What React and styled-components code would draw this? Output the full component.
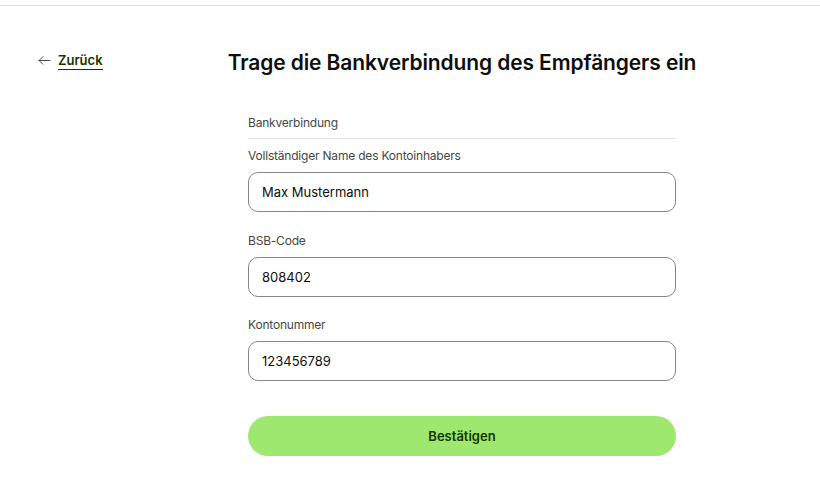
import React from "react";
import styled, { createGlobalStyle } from "styled-components";

const GlobalStyle = createGlobalStyle`
  html, body {
    margin: 0;
    padding: 0;
    background: #fff;
    font-family: Inter, "Noto Sans", sans-serif;
    color: #0e0f0c;
  }
`;

const fields = [
  { label: "Vollständiger Name des Kontoinhabers", value: "Max Mustermann", gap: 21 },
  { label: "BSB-Code", value: "808402", gap: 20 },
  { label: "Kontonummer", value: "123456789", gap: 20 },
];

const App = () => {
  return (
    <>
      <GlobalStyle />
      <TopBar />
      <Page>
        <Aside>
          <BackLink href="#">
            <svg width="13" height="13" viewBox="0 0 24 24" fill="none" stroke="#454745" strokeWidth="1.8" strokeLinecap="round" strokeLinejoin="round">
              <path d="M22 12H2" />
              <path d="M9 5l-7 7 7 7" />
            </svg>
            <span>Zurück</span>
          </BackLink>
        </Aside>
        <Main>
          <Title>Trage die Bankverbindung des Empfängers ein</Title>
          <Form onSubmit={(e) => e.preventDefault()}>
            <Section>Bankverbindung</Section>
            {fields.map((f) => (
              <Field key={f.label} $gap={f.gap}>
                <Label>{f.label}</Label>
                <Input defaultValue={f.value} />
              </Field>
            ))}
            <SubmitButton type="submit">Bestätigen</SubmitButton>
          </Form>
        </Main>
      </Page>
    </>
  );
};

export default App;

const TopBar = styled.div`
  height: 5px;
  border-bottom: 1px solid #dedede;
`;

const Page = styled.div`
  display: flex;
  padding: 0 38px;
`;

const Aside = styled.div`
  width: 210px;
  flex-shrink: 0;
  padding-top: 45px;
`;

const BackLink = styled.a`
  display: inline-flex;
  align-items: center;
  gap: 7px;
  text-decoration: none;
  color: #163300;
  font-size: 13px;
  font-weight: 600;

  span {
    border-bottom: 1.5px solid #163300;
    line-height: 18px;
  }
`;

const Main = styled.div`
  width: 428px;
  display: flex;
  flex-direction: column;
`;

const Title = styled.h1`
  margin: 43px -60px 0;
  text-align: center;
  font-size: 21px;
  line-height: 28px;
  font-weight: 600;
  letter-spacing: -0.12px;
  color: #0e0f0c;
`;

const Form = styled.form`
  display: flex;
  flex-direction: column;
  margin-top: 38px;
`;

const Section = styled.div`
  font-size: 12px;
  line-height: 16px;
  letter-spacing: -0.2px;
  color: #454745;
  padding-bottom: 7px;
  border-bottom: 1px solid #e2e2e2;
  margin-bottom: 9px;
`;

const Field = styled.div`
  display: flex;
  flex-direction: column;
  margin-bottom: ${(p) => p.$gap}px;
`;

const Label = styled.label`
  font-size: 12px;
  line-height: 16px;
  letter-spacing: -0.2px;
  color: #454745;
  margin-bottom: 8px;
`;

const Input = styled.input`
  box-sizing: border-box;
  height: 40px;
  width: 100%;
  padding: 0 13px;
  border: 1px solid #868685;
  border-radius: 10px;
  font-family: Inter, "Noto Sans", sans-serif;
  font-size: 13px;
  color: #0e0f0c;
  background: #fff;
  outline: none;
`;

const SubmitButton = styled.button`
  height: 40px;
  margin-top: 15px;
  border: none;
  border-radius: 20px;
  background: #9fe870;
  color: #163300;
  font-family: Inter, "Noto Sans", sans-serif;
  font-size: 13px;
  font-weight: 600;
  cursor: pointer;
`;
